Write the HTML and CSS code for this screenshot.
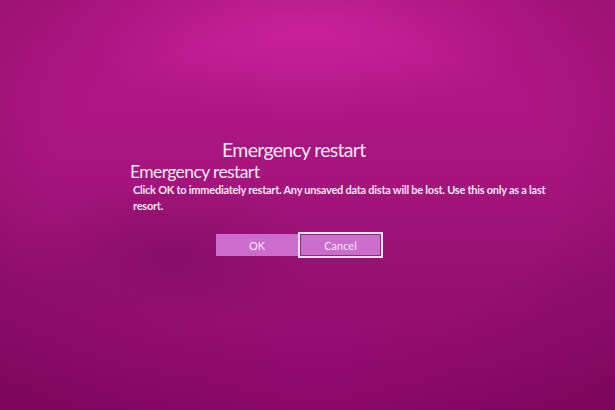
FILE: index.html
```html
<!DOCTYPE html>
<html lang="en">
<head>
  <meta charset="UTF-8" />
  <meta name="viewport" content="width=device-width, initial-scale=1.0"/>
  <title>Emergency restart</title>
  <link rel="stylesheet" href="styles.css">
</head>
<body>
  <main class="screen">
    <h1 class="screen-title">Emergency restart</h1>
    <section class="dialog">
      <h2>Emergency restart</h2>
      <p>Click OK to immediately restart. Any unsaved data dista will be lost. Use this only as a last resort.</p>
      <div class="actions">
        <button type="button" class="btn">OK</button>
        <button type="button" class="btn btn-focus">Cancel</button>
      </div>
    </section>
  </main>
</body>
</html>
```

FILE: styles.css
```css
html, body {
  margin: 0;
  padding: 0;
  height: 100%;
}

body {
  font-family: Lato, "Open Sans", sans-serif;
  color: #f4e6f0;
  background:
    radial-gradient(ellipse 75% 65% at 50% 45%, transparent 55%, rgba(90, 0, 60, 0.35) 100%),
    radial-gradient(ellipse 50% 32% at 50% 5%, rgba(215, 40, 165, 0.6), transparent 75%),
    radial-gradient(ellipse 35% 25% at 28% 62%, rgba(110, 10, 85, 0.4), transparent 70%),
    radial-gradient(ellipse 30% 25% at 52% 95%, rgba(160, 10, 130, 0.4), transparent 70%),
    linear-gradient(180deg, #bb1a8e 0%, #a8157f 38%, #951072 70%, #940a70 100%);
  overflow: hidden;
}

.screen {
  padding: 137px 0 0 130px;
}

.screen-title {
  margin: 0;
  padding-left: 92px;
  font-size: 19.5px;
  font-weight: 400;
  line-height: 25px;
  letter-spacing: -0.7px;
}

.dialog {
  width: 430px;
}

.dialog h2 {
  margin: 0;
  font-size: 17.5px;
  font-weight: 400;
  line-height: 20px;
  letter-spacing: -0.6px;
}

.dialog p {
  margin: 0 0 0 3px;
  font-size: 11px;
  font-weight: 700;
  line-height: 16px;
  letter-spacing: -0.25px;
}

.actions {
  display: flex;
  align-items: center;
  margin: 18px 0 0 86px;
}

.btn {
  width: 82px;
  height: 22px;
  padding: 0;
  border: none;
  background: #cd6ccd;
  color: #f6e8f4;
  font-family: inherit;
  font-size: 11px;
}

.btn-focus {
  width: 85px;
  height: 26px;
  border: 2px solid #ece0ea;
  outline: 1px solid #8a2a78;
  outline-offset: -3px;
}
```
